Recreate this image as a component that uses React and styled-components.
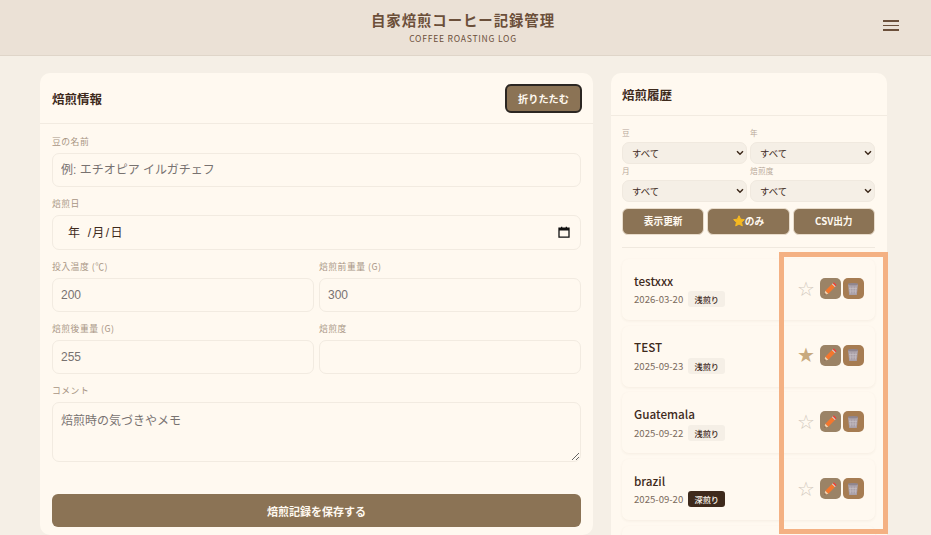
import React from 'react';
import styled, { createGlobalStyle } from 'styled-components';

const historyItems = [
  { id: 1, name: 'testxxx', date: '2026-03-20', roast: '浅煎り', dark: false, favorite: false },
  { id: 2, name: 'TEST', date: '2025-09-23', roast: '浅煎り', dark: false, favorite: true },
  { id: 3, name: 'Guatemala', date: '2025-09-22', roast: '浅煎り', dark: false, favorite: false },
  { id: 4, name: 'brazil', date: '2025-09-20', roast: '深煎り', dark: true, favorite: false },
];

const filters = [
  { label: '豆' },
  { label: '年' },
  { label: '月' },
  { label: '焙煎度' },
];

const chevron = encodeURIComponent(
  '<svg xmlns="http://www.w3.org/2000/svg" width="8" height="6" viewBox="0 0 8 6"><path d="M1 1.3l3 3 3-3" fill="none" stroke="#3e2a1c" stroke-width="1.5"/></svg>'
);

const PencilIcon = () => (
  <svg width="14" height="14" viewBox="0 0 14 14">
    <path d="M2.3 8.7 9 2l3 3-6.7 6.7z" fill="#f4772e" />
    <path d="M9.6 1.4l.6-.5c.4-.4 1-.4 1.4 0l1.5 1.5c.4.4.4 1 0 1.4l-.5.6z" fill="#e8453c" />
    <path d="M8.9 2.1l3 3 .7-.7-3-3z" fill="#e6dcd6" />
    <path d="M2.3 8.7l3 3-4 1z" fill="#f3cfa8" />
    <path d="M1.8 11l1.2 1.2-1.7.5z" fill="#4a3326" />
  </svg>
);

const TrashIcon = () => (
  <svg width="14" height="14" viewBox="0 0 14 14">
    <path d="M2 2.2h10L10.8 13H3.2z" fill="#aaa0a8" />
    <ellipse cx="7" cy="2.2" rx="5" ry="1.1" fill="#8f8690" />
    <path d="M4 4.5l.6 7M7 4.5v7M10 4.5l-.6 7M3 6.5h8M3.3 9h7.4" stroke="#c9c2c8" strokeWidth=".6" fill="none" />
  </svg>
);

const StarIcon = () => (
  <svg width="12" height="12" viewBox="0 0 24 24">
    <path d="M12 1.5l3.2 6.9 7.5.9-5.6 5.1 1.5 7.4L12 18.1l-6.6 3.7 1.5-7.4L1.3 9.3l7.5-.9z" fill="#f5b921" stroke="#f5b921" strokeWidth="2" strokeLinejoin="round" />
  </svg>
);

const CalendarIcon = () => (
  <svg width="12" height="12" viewBox="0 0 12 12">
    <path d="M1 2.2h10v9H1z" fill="none" stroke="#111" strokeWidth="1.3" />
    <path d="M1 2h10v2.6H1zM3 .7h1.3V2H3zM7.7.7H9V2H7.7z" fill="#111" />
  </svg>
);

const App = () => {
  return (
    <>
      <GlobalStyle />
      <Header>
        <TitleBlock>
          <Title>自家焙煎コーヒー記録管理</Title>
          <Subtitle>COFFEE ROASTING LOG</Subtitle>
        </TitleBlock>
        <MenuButton aria-label="menu">
          <span />
          <span />
          <span />
        </MenuButton>
      </Header>

      <Main>
        <FormCard>
          <FormHead>
            <CardTitle>焙煎情報</CardTitle>
            <CollapseButton>折りたたむ</CollapseButton>
          </FormHead>
          <FormBody>
            <Field>
              <FieldLabel>豆の名前</FieldLabel>
              <TextInput placeholder="例: エチオピア イルガチェフ" />
            </Field>
            <Field>
              <FieldLabel>焙煎日</FieldLabel>
              <DateField>
                <DateText>年 /月/日</DateText>
                <CalendarIcon />
              </DateField>
            </Field>
            <TwoColumns>
              <Field>
                <FieldLabel>投入温度 (℃)</FieldLabel>
                <TextInput placeholder="200" />
              </Field>
              <Field>
                <FieldLabel>焙煎前重量 (g)</FieldLabel>
                <TextInput placeholder="300" />
              </Field>
            </TwoColumns>
            <TwoColumns>
              <Field>
                <FieldLabel>焙煎後重量 (g)</FieldLabel>
                <TextInput placeholder="255" />
              </Field>
              <Field>
                <FieldLabel>焙煎度</FieldLabel>
                <TextInput />
              </Field>
            </TwoColumns>
            <Field>
              <FieldLabel>コメント</FieldLabel>
              <CommentInput placeholder="焙煎時の気づきやメモ" />
            </Field>
            <SaveButton>焙煎記録を保存する</SaveButton>
          </FormBody>
        </FormCard>

        <HistoryCard>
          <HistoryHead>
            <CardTitle>焙煎履歴</CardTitle>
          </HistoryHead>
          <HistoryBody>
            <FilterGrid>
              {filters.map((filter) => (
                <div key={filter.label}>
                  <FilterLabel>{filter.label}</FilterLabel>
                  <FilterSelect>
                    <option>すべて</option>
                  </FilterSelect>
                </div>
              ))}
            </FilterGrid>
            <FilterActions>
              <ActionButton>表示更新</ActionButton>
              <ActionButton>
                <StarIcon />
                のみ
              </ActionButton>
              <ActionButton>CSV出力</ActionButton>
            </FilterActions>
            <Divider />
            <HistoryList>
              {historyItems.map((item) => (
                <HistoryItem key={item.id}>
                  <ItemInfo>
                    <ItemName>{item.name}</ItemName>
                    <ItemMeta>
                      <ItemDate>{item.date}</ItemDate>
                      <RoastBadge $dark={item.dark}>{item.roast}</RoastBadge>
                    </ItemMeta>
                  </ItemInfo>
                  <FavoriteMark $on={item.favorite}>{item.favorite ? '★' : '☆'}</FavoriteMark>
                  <IconButton $bg="#9b8366"><PencilIcon /></IconButton>
                  <IconButton $bg="#a67c52"><TrashIcon /></IconButton>
                </HistoryItem>
              ))}
              <HistoryItem />
            </HistoryList>
          </HistoryBody>
        </HistoryCard>

        <Highlight />
      </Main>
    </>
  );
};

export default App;


const GlobalStyle = createGlobalStyle`
  html, body {
    margin: 0;
    height: 535px;
    overflow: hidden;
    background: #f5efe6;
    font-family: 'Noto Sans CJK JP', sans-serif;
    color: #3e2a1c;
  }
  * {
    box-sizing: border-box;
  }
`;

const Header = styled.header`
  height: 56px;
  display: flex;
  align-items: center;
  padding: 0 24px 2px 51px;
  background-color: #ebe1d6;
  border-bottom: 1px solid #dfd5c9;
`;

const TitleBlock = styled.div`
  flex: 1;
  text-align: center;
`;

const Title = styled.h1`
  margin: 0;
  font-size: 14.4px;
  line-height: 20px;
  font-weight: 700;
  letter-spacing: 0.95px;
  color: #6b4f3a;
`;

const Subtitle = styled.p`
  margin: 2px 0 0;
  font-size: 8.6px;
  line-height: 12px;
  letter-spacing: 0.75px;
  color: #6b4f3a;
`;

const MenuButton = styled.button`
  width: 32px;
  height: 32px;
  margin-top: -2px;
  padding: 0 8px;
  border: none;
  background: transparent;
  display: flex;
  flex-direction: column;
  justify-content: center;
  gap: 3px;
  & span {
    display: block;
    height: 1.7px;
    background-color: #6b4f3a;
  }
`;

const Main = styled.main`
  position: relative;
  display: flex;
  align-items: flex-start;
  gap: 18px;
  padding: 17px 44px 0 40px;
`;

const FormCard = styled.section`
  width: 553px;
  flex-shrink: 0;
  background-color: #fff9f0;
  border-radius: 10px;
`;

const FormHead = styled.div`
  height: 51px;
  padding: 0 11px 0 12px;
  display: flex;
  align-items: center;
  justify-content: space-between;
  border-bottom: 1px solid #f2ebe1;
`;

const CardTitle = styled.h2`
  margin: 0;
  font-size: 12.5px;
  font-weight: 700;
  color: #3e2a1c;
`;

const CollapseButton = styled.button`
  width: 77px;
  height: 29px;
  padding: 0;
  border: 2px solid #2b2622;
  border-radius: 6px;
  background-color: #8b7355;
  color: #fff9f0;
  font-family: inherit;
  font-size: 10.2px;
  font-weight: 700;
`;

const FormBody = styled.div`
  padding: 12px 12px 8px;
  display: flex;
  flex-direction: column;
  gap: 11px;
`;

const Field = styled.div`
  display: flex;
  flex-direction: column;
  gap: 6px;
  min-width: 0;
`;

const FieldLabel = styled.label`
  font-size: 8.8px;
  line-height: 11px;
  letter-spacing: 0.5px;
  text-transform: uppercase;
  color: #a89584;
`;

const TextInput = styled.input`
  width: 100%;
  height: 34px;
  padding: 0 8px;
  border: 1px solid #f2ebe1;
  border-radius: 7px;
  background-color: #fff9f0;
  outline: none;
  font-family: 'Liberation Sans', 'Noto Sans CJK JP', sans-serif;
  font-size: 12px;
  &::placeholder {
    color: #787270;
    opacity: 1;
  }
`;

const DateField = styled.div`
  height: 35px;
  padding: 0 10px 2px 15px;
  display: flex;
  align-items: center;
  justify-content: space-between;
  border: 1px solid #f2ebe1;
  border-radius: 7px;
  font-family: 'Liberation Sans', 'Noto Sans CJK JP', sans-serif;
  font-size: 12px;
`;

const DateText = styled.span`
  color: #3e2a1c;
  letter-spacing: 1.4px;
  word-spacing: 1.5px;
`;

const TwoColumns = styled.div`
  display: grid;
  grid-template-columns: 1fr 1fr;
  gap: 5px;
`;

const CommentInput = styled.textarea`
  width: 100%;
  height: 60px;
  padding: 8px 8px;
  border: 1px solid #f2ebe1;
  border-radius: 7px;
  background-color: #fff9f0;
  outline: none;
  font-family: 'Liberation Sans', 'Noto Sans CJK JP', sans-serif;
  font-size: 12px;
  &::placeholder {
    color: #787270;
    opacity: 1;
  }
`;

const SaveButton = styled.button`
  height: 33px;
  margin-top: 21px;
  border: none;
  border-radius: 6px;
  background-color: #8b7355;
  color: #fff9f0;
  font-family: inherit;
  font-size: 11px;
  font-weight: 700;
`;

const HistoryCard = styled.section`
  width: 276px;
  flex-shrink: 0;
  background-color: #fff9f0;
  border-radius: 10px;
`;

const HistoryHead = styled.div`
  height: 43px;
  padding: 0 11px;
  display: flex;
  align-items: center;
  border-bottom: 1px solid #f2ebe1;
`;

const HistoryBody = styled.div`
  padding: 10px 12px 0 11px;
`;

const FilterGrid = styled.div`
  display: grid;
  grid-template-columns: 125px 125px;
  column-gap: 3px;
`;

const FilterLabel = styled.div`
  height: 16px;
  font-size: 7.6px;
  line-height: 14px;
  letter-spacing: 0.3px;
  color: #b8a899;
`;

const FilterSelect = styled.select`
  display: block;
  width: 100%;
  height: 22px;
  padding: 0 0 0 9px;
  appearance: none;
  border: 1px solid #f0e9df;
  border-radius: 7px;
  background: #f5efe6 url("data:image/svg+xml,${chevron}") no-repeat right 2px center;
  color: #3e2a1c;
  font-family: 'Liberation Sans', 'Noto Sans CJK JP', sans-serif;
  font-size: 9.4px;
`;

const FilterActions = styled.div`
  display: grid;
  grid-template-columns: repeat(3, 1fr);
  gap: 3px;
  margin-top: 6px;
`;

const ActionButton = styled.button`
  height: 26.5px;
  padding: 0;
  display: flex;
  align-items: center;
  justify-content: center;
  border: 1px solid #e8dccb;
  border-radius: 6px;
  background-color: #8b7355;
  color: #fff9f0;
  font-family: inherit;
  font-size: 9.7px;
  font-weight: 700;
`;

const Divider = styled.div`
  height: 1px;
  margin: 12px 0 11.5px;
  background-color: #f0e9df;
`;

const HistoryList = styled.div`
  display: flex;
  flex-direction: column;
  gap: 5.7px;
`;

const HistoryItem = styled.div`
  height: 61px;
  flex-shrink: 0;
  padding: 0 11.5px 0 12px;
  display: flex;
  align-items: center;
  border-radius: 7px;
  background-color: #fff9f0;
  box-shadow: 0 1px 3px rgba(120, 90, 60, 0.07);
`;

const ItemInfo = styled.div`
  flex: 1;
  min-width: 0;
`;

const ItemName = styled.div`
  font-size: 11.7px;
  line-height: 17px;
  font-weight: 500;
  color: #3e2a1c;
`;

const ItemMeta = styled.div`
  margin-top: 2.5px;
  display: flex;
  align-items: center;
  gap: 5px;
`;

const ItemDate = styled.span`
  font-size: 9.6px;
  color: #7a6a5c;
`;

const RoastBadge = styled.span`
  width: 37px;
  height: 16px;
  display: flex;
  align-items: center;
  justify-content: center;
  border-radius: 3px;
  font-size: 8.2px;
  font-weight: 500;
  background-color: ${({ $dark }) => ($dark ? '#3e2a1c' : '#f5efe6')};
  color: ${({ $dark }) => ($dark ? '#fff9f0' : '#3e2a1c')};
`;

const FavoriteMark = styled.span`
  width: 16px;
  flex-shrink: 0;
  margin-right: 4.5px;
  margin-bottom: 2px;
  text-align: center;
  font-family: 'DejaVu Sans', sans-serif;
  font-size: 20px;
  line-height: 20px;
  color: ${({ $on }) => ($on ? '#c8a97e' : '#d3c9be')};
`;

const IconButton = styled.button`
  width: 20.5px;
  height: 21px;
  flex-shrink: 0;
  margin-left: 2.5px;
  margin-bottom: 2px;
  padding: 0;
  display: flex;
  align-items: center;
  justify-content: center;
  border: none;
  border-radius: 5px;
  background-color: ${({ $bg }) => $bg};
`;

const Highlight = styled.div`
  position: absolute;
  left: 779px;
  top: 196px;
  width: 109px;
  height: 282px;
  border: 5px solid #f4b183;
  pointer-events: none;
`;
